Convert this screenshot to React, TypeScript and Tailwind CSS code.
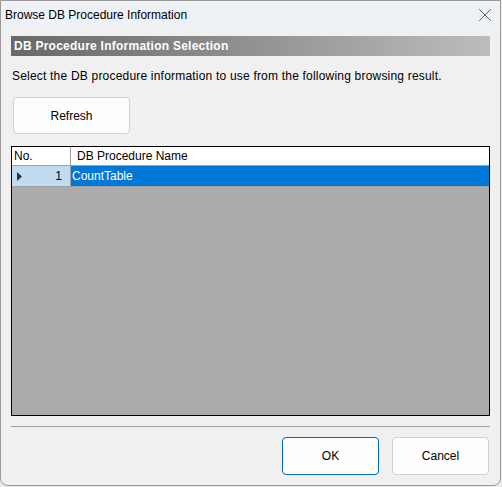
import { X } from 'lucide-react';

const font = { fontFamily: '"Liberation Sans", Arial, sans-serif' };

export default function App() {
  return (
    <div className="w-[502px] h-[487px] bg-[#e9e9e9]" style={font}>
      <div className="w-[501px] h-[486px] flex flex-col bg-[#f0f0f0] border border-[#9a9a9a] rounded-b-[8px] overflow-hidden">
        {/* Title bar */}
        <div className="h-[27px] shrink-0 bg-[#eef2f7] flex items-center justify-between pl-[4px] pr-[4px]">
          <span className="text-[12px] text-black">Browse DB Procedure Information</span>
          <X className="w-[22px] h-[22px] text-[#1a1a1a]" strokeWidth={0.75} />
        </div>

        <div className="flex flex-col px-[10px] pt-[8px]">
          {/* Section header */}
          <div className="h-[20px] flex items-center pl-[3px] bg-gradient-to-r from-[#686868] to-[#bdbdbd]">
            <span className="text-[12px] font-bold text-white tracking-[0.25px]">
              DB Procedure Information Selection
            </span>
          </div>

          <p className="mt-[12px] pl-[1px] text-[12px] text-black leading-[16px] tracking-[0.2px]">
            Select the DB procedure information to use from the following browsing result.
          </p>

          <button className="mt-[13px] ml-[2px] w-[117px] h-[37px] rounded-[4px] border border-[#d0d0d0] bg-[#fdfdfd] text-[12px] text-black">
            Refresh
          </button>

          {/* Grid */}
          <div className="mt-[12px] h-[270px] border border-black bg-[#ababab] flex flex-col">
            <div className="h-[19px] flex bg-white border-b border-[#a0a0a0] text-[12px] text-black">
              <div className="w-[59px] border-r border-[#a0a0a0] flex items-center pl-[2px]">No.</div>
              <div className="flex-1 flex items-center pl-[6px]">DB Procedure Name</div>
            </div>
            <div className="h-[21px] flex border-b border-[#a0a0a0] text-[12px]">
              <div className="w-[59px] bg-[#bfdcf3] border-r border-[#a0a0a0] flex items-center justify-between pl-[5px] pr-[8px] text-black">
                <svg width="5" height="9" viewBox="0 0 5 9">
                  <path d="M0 0 L5 4.5 L0 9 Z" fill="#333" />
                </svg>
                <span>1</span>
              </div>
              <div className="flex-1 bg-[#0078d7] text-white flex items-center pl-[1px]">CountTable</div>
            </div>
          </div>

          <div className="mt-[10px] h-px bg-[#a0a0a0]" />

          <div className="mt-[10px] flex justify-end gap-[13px] pr-[1px]">
            <button className="w-[97px] h-[38px] rounded-[4px] border border-[#0067c0] bg-[#fdfdfd] text-[12px] text-black">
              OK
            </button>
            <button className="w-[97px] h-[38px] rounded-[4px] border border-[#d0d0d0] bg-[#fdfdfd] text-[12px] text-black">
              Cancel
            </button>
          </div>
        </div>
      </div>
    </div>
  );
}
